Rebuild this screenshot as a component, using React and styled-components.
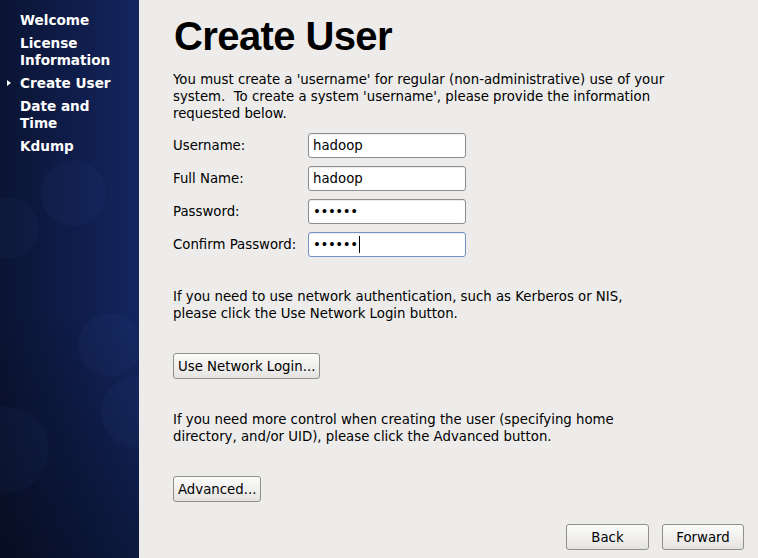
import React from 'react';
import styled, { createGlobalStyle } from 'styled-components';

const GlobalStyle = createGlobalStyle`
  html, body {
    margin: 0;
    padding: 0;
    background: #edeceb;
  }
  body {
    font-family: "DejaVu Sans", "Liberation Sans", sans-serif;
  }
`;

const Page = styled.div`
  display: flex;
  width: 758px;
  height: 558px;
  overflow: hidden;
  background: #edeceb;
`;

const Sidebar = styled.nav`
  width: 139px;
  flex-shrink: 0;
  box-sizing: border-box;
  padding: 12px 0 0 20px;
  display: flex;
  flex-direction: column;
  gap: 6px;
  background:
    radial-gradient(circle at 73px 193px, rgba(60, 90, 170, 0.07) 0 32px, transparent 33px),
    radial-gradient(circle at 8px 228px, rgba(60, 90, 170, 0.06) 0 30px, transparent 31px),
    radial-gradient(circle at 110px 345px, rgba(60, 90, 170, 0.07) 0 31px, transparent 32px),
    radial-gradient(circle at 137px 412px, rgba(60, 90, 170, 0.07) 0 35px, transparent 36px),
    radial-gradient(circle at 5px 450px, rgba(60, 90, 170, 0.06) 0 43px, transparent 44px),
    linear-gradient(to bottom, rgba(0, 0, 0, 0) 55%, rgba(0, 0, 0, 0.35) 100%),
    linear-gradient(to right, #0b1433 0%, #0f1d4b 55%, #13265f 100%);
`;

const Step = styled.div`
  position: relative;
  color: #ffffff;
  font-family: "DejaVu Sans", sans-serif;
  font-weight: bold;
  font-size: 13.6px;
  line-height: 17px;
`;

const Marker = styled.span`
  position: absolute;
  left: -13px;
  top: 5px;
  width: 0;
  height: 0;
  border-top: 3.5px solid transparent;
  border-bottom: 3.5px solid transparent;
  border-left: 4px solid #ffffff;
`;

const Main = styled.main`
  flex: 1;
  box-sizing: border-box;
  padding: 13px 14px 8px 34px;
  display: flex;
  flex-direction: column;
  color: #000000;
`;

const Title = styled.h1`
  margin: 0;
  font-family: "Liberation Sans", Arial, sans-serif;
  font-weight: bold;
  font-size: 40px;
  line-height: 46px;
  letter-spacing: -0.6px;
  padding-left: 1px;
`;

const Text = styled.p`
  margin: ${p => p.$top || 0}px 0 0 0;
  font-size: 13.3px;
  line-height: 17px;
`;

const Form = styled.div`
  display: grid;
  grid-template-columns: 135px 158px;
  row-gap: 8px;
  margin-top: 11px;
  align-items: center;
  font-size: 13.3px;
`;

const Label = styled.span`
  line-height: 17px;
`;

const Entry = styled.div`
  box-sizing: border-box;
  height: 25px;
  padding: 0 4px;
  display: flex;
  align-items: center;
  background: #ffffff;
  border: 1px solid ${p => (p.$focused ? '#7393c4' : '#8d8d8d')};
  border-radius: 3px;
  box-shadow: inset 0 1px 1px rgba(0, 0, 0, 0.08);
  font-size: 13.3px;
  letter-spacing: ${p => (p.$secret ? '-0.4px' : '0')};
`;

const Caret = styled.span`
  display: inline-block;
  width: 1px;
  height: 17px;
  margin-left: 1px;
  background: #000000;
`;

const Button = styled.button`
  align-self: flex-start;
  box-sizing: border-box;
  height: 26px;
  padding: 0 4px;
  min-width: ${p => p.$min || 0}px;
  margin-top: ${p => p.$top || 0}px;
  font-family: "DejaVu Sans", sans-serif;
  font-size: 13.3px;
  color: #000000;
  background: linear-gradient(to bottom, #fbfbfa 0%, #f1f0ef 50%, #e4e3e1 100%);
  border: 1px solid #8f8f8d;
  border-radius: 3px;
  cursor: pointer;
`;

const Footer = styled.div`
  margin-top: auto;
  display: flex;
  justify-content: flex-end;
  gap: 13px;
`;

const steps = [
  { label: 'Welcome' },
  { label: ['License', 'Information'] },
  { label: 'Create User', current: true },
  { label: ['Date and', 'Time'] },
  { label: 'Kdump' },
];

const fields = [
  { label: 'Username:', value: 'hadoop' },
  { label: 'Full Name:', value: 'hadoop' },
  { label: 'Password:', value: '••••••', secret: true },
  { label: 'Confirm Password:', value: '••••••', secret: true, focused: true },
];

export default function App() {
  return (
    <Page>
      <GlobalStyle />
      <Sidebar>
        {steps.map((s, i) => (
          <Step key={i}>
            {s.current && <Marker />}
            {Array.isArray(s.label) ? (
              <>
                {s.label[0]}
                <br />
                {s.label[1]}
              </>
            ) : (
              s.label
            )}
          </Step>
        ))}
      </Sidebar>
      <Main>
        <Title>Create User</Title>
        <Text $top={12}>
          You must create a 'username' for regular (non-administrative) use of your
          <br />
          system.&nbsp; To create a system 'username', please provide the information
          <br />
          requested below.
        </Text>
        <Form>
          {fields.map(f => (
            <React.Fragment key={f.label}>
              <Label>{f.label}</Label>
              <Entry $focused={f.focused} $secret={f.secret}>
                {f.value}
                {f.focused && <Caret />}
              </Entry>
            </React.Fragment>
          ))}
        </Form>
        <Text $top={31}>
          If you need to use network authentication, such as Kerberos or NIS,
          <br />
          please click the Use Network Login button.
        </Text>
        <Button $top={31}>Use Network Login...</Button>
        <Text $top={32}>
          If you need more control when creating the user (specifying home
          <br />
          directory, and/or UID), please click the Advanced button.
        </Text>
        <Button $top={31}>Advanced...</Button>
        <Footer>
          <Button $min={83}>Back</Button>
          <Button $min={82}>Forward</Button>
        </Footer>
      </Main>
    </Page>
  );
}
